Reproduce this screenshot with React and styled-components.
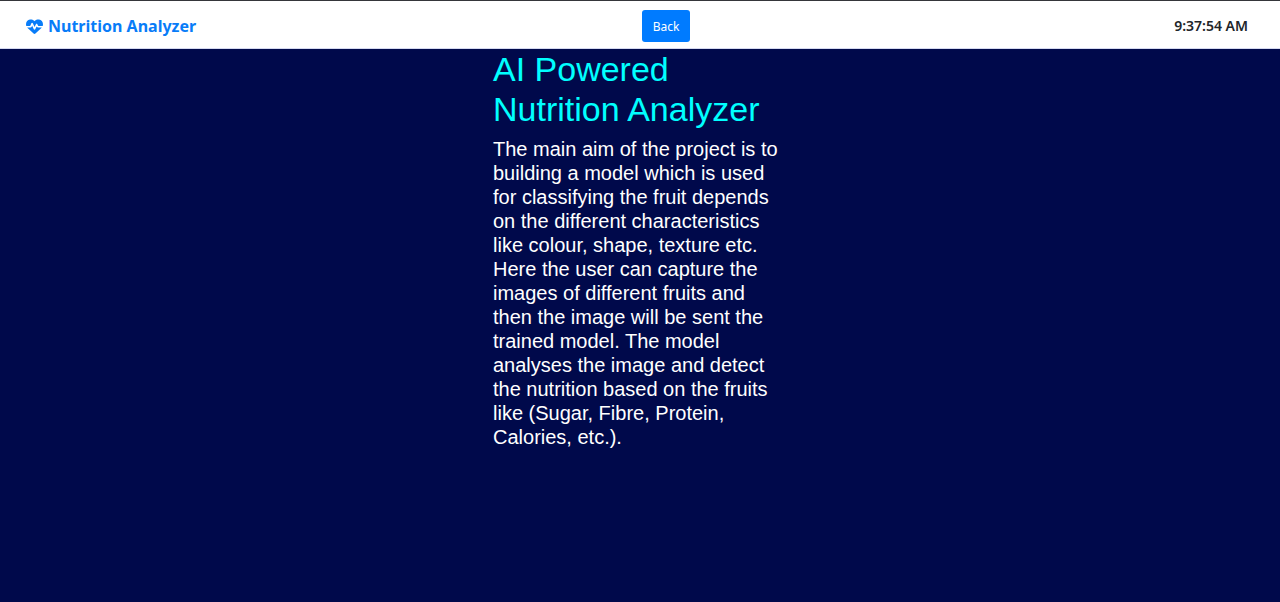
import React from 'react';
import styled, { createGlobalStyle } from 'styled-components';
import { FaHeartPulse } from 'react-icons/fa6';

const GlobalStyle = createGlobalStyle`
  * { box-sizing: border-box; }
  body {
    margin: 0;
    background: #00094b;
    font-family: "Noto Sans", sans-serif;
  }
`;

const Navbar = styled.header`
  display: flex;
  justify-content: space-between;
  align-items: center;
  padding: 9px 32px 6px 26px;
  border-top: 1px solid #35363a;
  border-bottom: 1px solid #d5d9f0;
  background: #fff;
`;

const Brand = styled.a`
  display: flex;
  align-items: center;
  gap: 5px;
  color: #087cf8;
  font: 700 16px/24px "Noto Sans", sans-serif;
  text-decoration: none;
`;

const BackButton = styled.button`
  height: 32px;
  padding: 2px 11px 0;
  border: 0;
  border-radius: 3px;
  background: #007bff;
  color: #fff;
  font: 400 12px/18px "Noto Sans", sans-serif;
  cursor: pointer;
`;

const Clock = styled.time`
  width: 112px;
  text-align: right;
  color: #212529;
  font: 600 14px/20px "Noto Sans", sans-serif;
`;

const Content = styled.main`
  width: 294px;
  margin: 0 auto;
  color: #fff;
  font-family: "Liberation Sans", Arial, sans-serif;
`;

const Title = styled.h1`
  margin: 0 0 8px;
  color: #00ffff;
  font-size: 34px;
  font-weight: 400;
  line-height: 40px;
`;

const Description = styled.p`
  margin: 0;
  font-size: 20px;
  line-height: 24px;
`;

export default function App() {
  return (
    <>
      <GlobalStyle />
      <Navbar>
        <Brand href="#"><FaHeartPulse size={17} />Nutrition Analyzer</Brand>
        <BackButton type="button">Back</BackButton>
        <Clock>9:37:54 AM</Clock>
      </Navbar>
      <Content>
        <Title>AI Powered Nutrition Analyzer</Title>
        <Description>
          The main aim of the project is to building a model which is used for
          classifying the fruit depends on the different characteristics like
          colour, shape, texture etc. Here the user can capture the images of
          different fruits and then the image will be sent the trained model.
          The model analyses the image and detect the nutrition based on the
          fruits like (Sugar, Fibre, Protein, Calories, etc.).
        </Description>
      </Content>
    </>
  );
}
